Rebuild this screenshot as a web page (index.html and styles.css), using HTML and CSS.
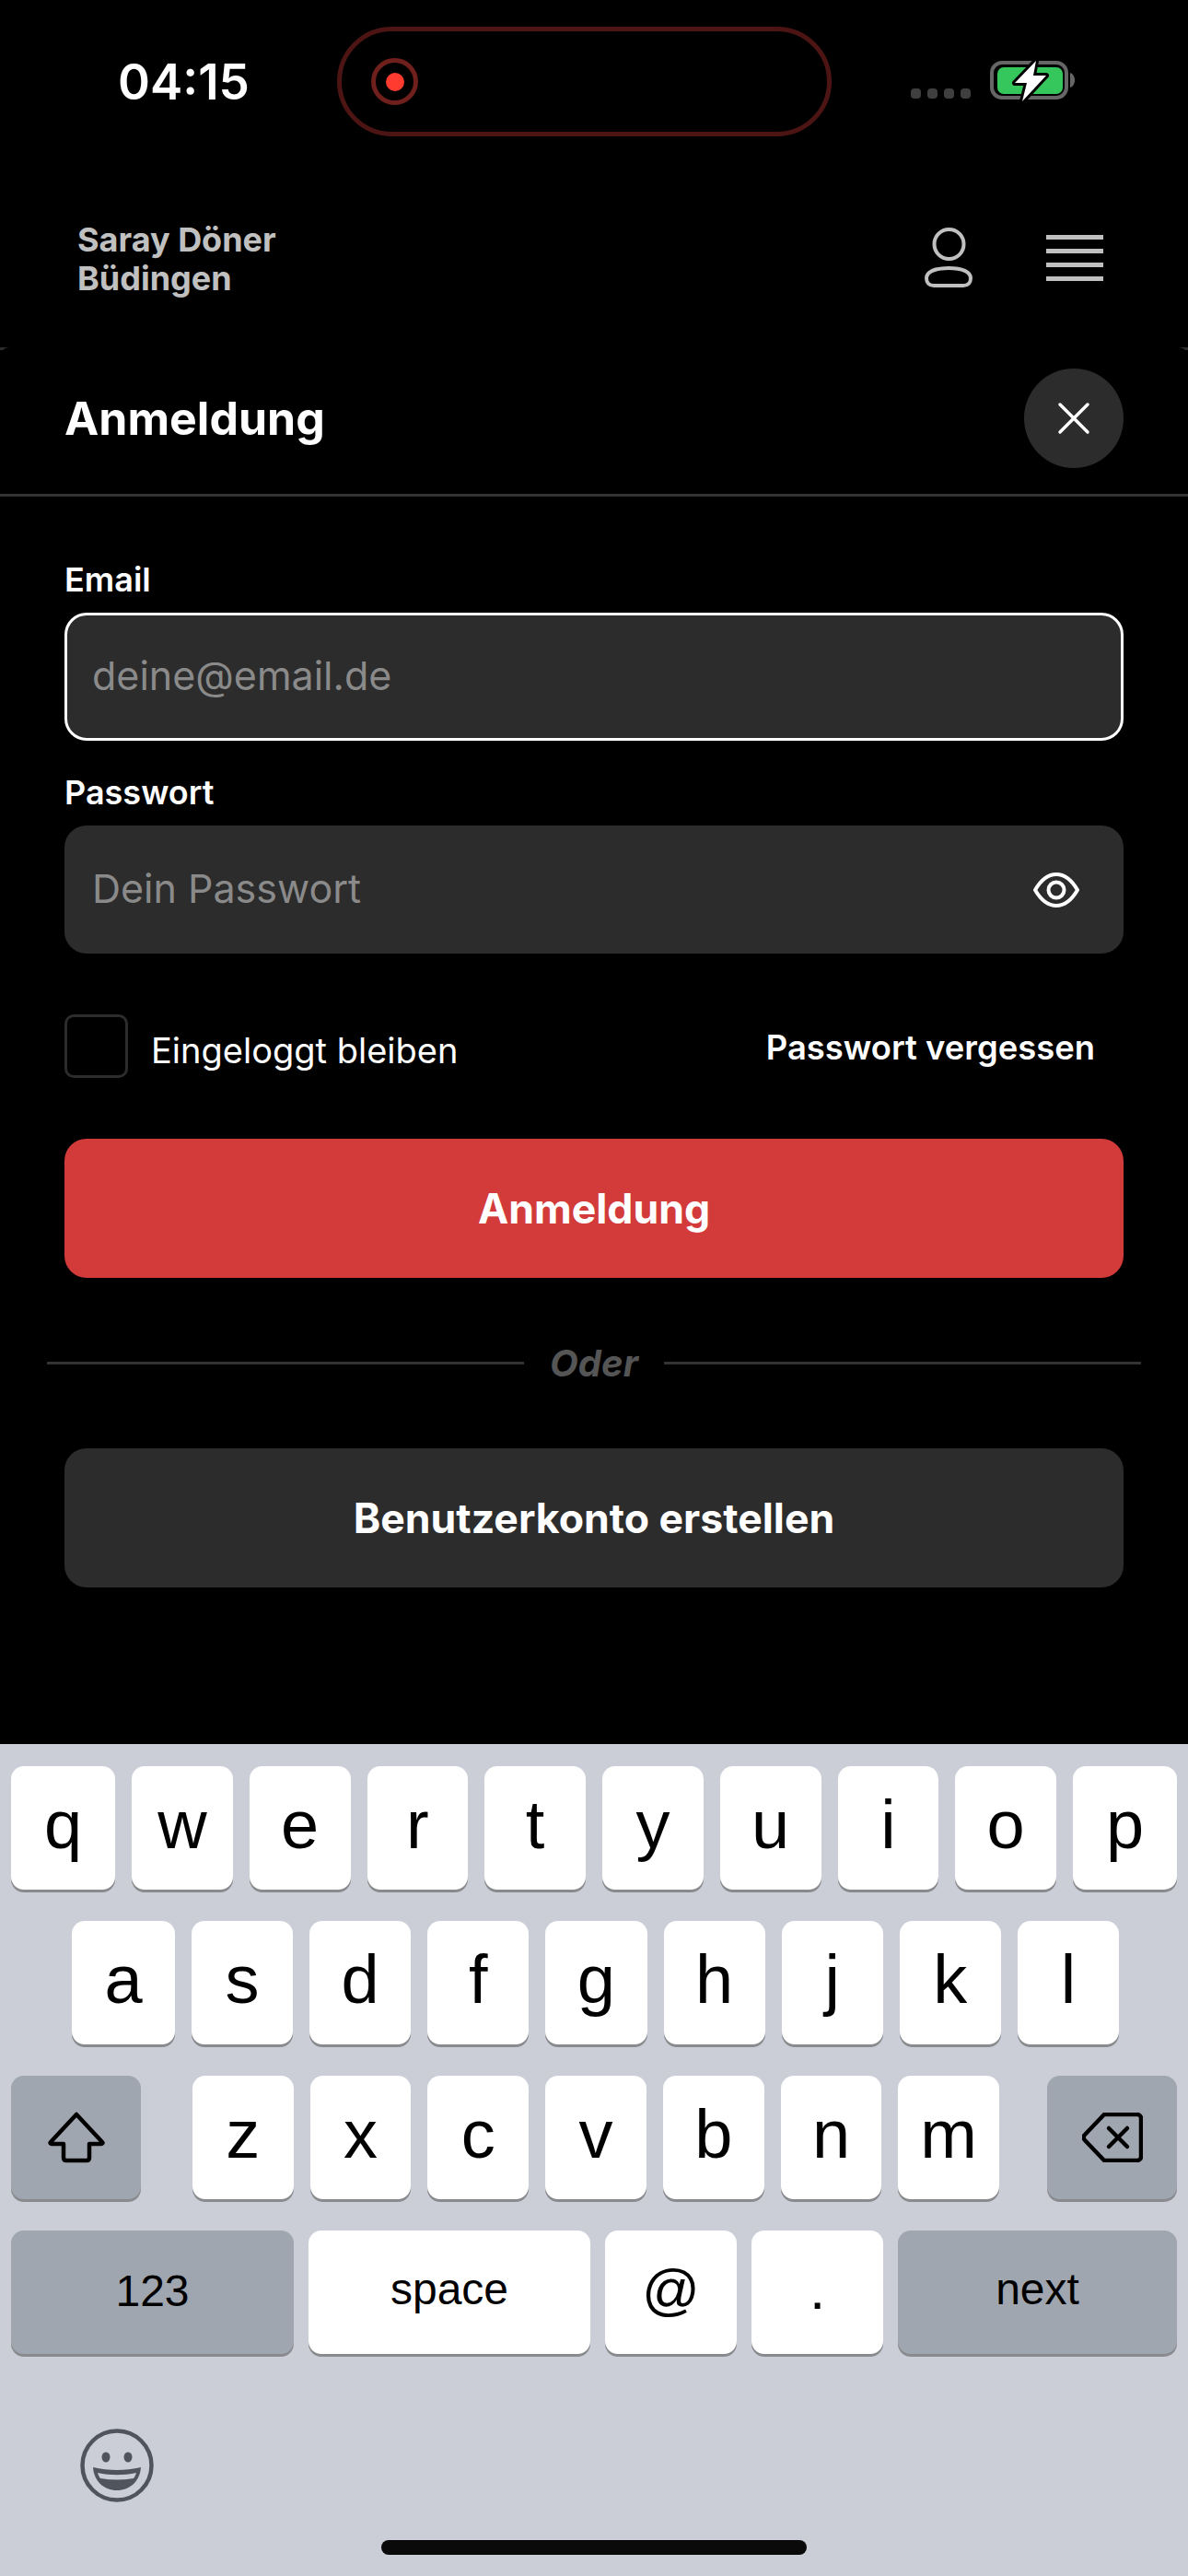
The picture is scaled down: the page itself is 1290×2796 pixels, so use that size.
FILE: index.html
```html
<!DOCTYPE html>
<html lang="de">
<head>
    <meta charset="UTF-8">
    <meta name="viewport" content="width=device-width, initial-scale=1.0">
    <title>Anmeldung</title>
    <link rel="stylesheet" href="styles.css">
</head>
<body>
    <div class="screen">
        <div class="status-bar">
            <span class="time">04:15</span>
            <div class="island">
                <span class="rec-ring"><span class="rec-dot"></span></span>
            </div>
            <div class="signal">
                <span></span><span></span><span></span><span></span>
            </div>
            <svg class="battery" width="94" height="46" viewBox="0 0 94 46">
                <rect x="2" y="4" width="81" height="38" rx="11" fill="none" stroke="#666" stroke-width="4"/>
                <rect x="8" y="9" width="71" height="29" rx="7" fill="#36c75c"/>
                <path d="M87 15c3 1 5 4 5 8s-2 7-5 8z" fill="#666"/>
                <path d="M50 2 27 26h13l-5 20 26-28H47z" fill="#fff" stroke="#000" stroke-width="6" stroke-linejoin="round" paint-order="stroke"/>
            </svg>
        </div>

        <div class="top-bar">
            <div class="shop-name">Saray Döner<br>Büdingen</div>
            <div class="top-icons">
                <svg width="54" height="68" viewBox="0 0 54 68" fill="none" stroke="#c0c0c0" stroke-width="4">
                    <circle cx="26.5" cy="19" r="16"/>
                    <path d="M2 56c0-7 9-11 24-11s24 4 24 11c0 5-3 8-8 8H10c-5 0-8-3-8-8z"/>
                </svg>
                <svg width="62" height="52" viewBox="0 0 62 52" fill="#c0c0c0">
                    <rect y="1" width="62" height="5"/>
                    <rect y="16" width="62" height="5"/>
                    <rect y="31" width="62" height="5"/>
                    <rect y="46" width="62" height="5"/>
                </svg>
            </div>
        </div>

        <div class="sheet">
            <div class="sheet-head">
                <h2>Anmeldung</h2>
                <button class="close-btn">
                    <svg width="36" height="36" viewBox="0 0 36 36" stroke="#fff" stroke-width="3.5" stroke-linecap="round">
                        <path d="M3 3l30 30M33 3 3 33"/>
                    </svg>
                </button>
            </div>

            <div class="form">
                <label class="field-label">Email</label>
                <div class="field field-active"><span class="placeholder">deine@email.de</span></div>

                <label class="field-label label-pass">Passwort</label>
                <div class="field">
                    <span class="placeholder">Dein Passwort</span>
                    <svg width="50" height="38" viewBox="0 0 50 38" fill="none" stroke="#fff" stroke-width="4">
                        <path d="M2 19C9 7 16 2 25 2s16 5 23 17c-7 12-14 17-23 17S9 31 2 19z" stroke-linejoin="round"/>
                        <circle cx="25" cy="19" r="8.5"/>
                    </svg>
                </div>

                <div class="options">
                    <label class="remember"><span class="checkbox"></span><span class="remember-text">Eingeloggt bleiben</span></label>
                    <a class="forgot">Passwort vergessen</a>
                </div>

                <button class="btn btn-red">Anmeldung</button>

                <div class="or-line"><span>Oder</span></div>

                <button class="btn btn-dark">Benutzerkonto erstellen</button>
            </div>
        </div>

        <div class="keyboard">
            <div class="kb-row kb-row-top">
                <div class="key">q</div><div class="key">w</div><div class="key">e</div><div class="key">r</div><div class="key">t</div><div class="key">y</div><div class="key">u</div><div class="key">i</div><div class="key">o</div><div class="key">p</div>
            </div>
            <div class="kb-row kb-row-mid">
                <div class="key">a</div><div class="key">s</div><div class="key">d</div><div class="key">f</div><div class="key">g</div><div class="key">h</div><div class="key">j</div><div class="key">k</div><div class="key">l</div>
            </div>
            <div class="kb-row">
                <div class="key key-grey key-shift">
                    <svg width="62" height="56" viewBox="0 0 62 56" fill="none" stroke="#000" stroke-width="4.5" stroke-linejoin="round">
                        <path d="M31 3 3 33c-1 1 0 2 1 2h13v15c0 2 1 3 3 3h22c2 0 3-1 3-3V35h13c1 0 2-1 1-2z"/>
                    </svg>
                </div>
                <div class="key-group">
                    <div class="key">z</div><div class="key">x</div><div class="key">c</div><div class="key">v</div><div class="key">b</div><div class="key">n</div><div class="key">m</div>
                </div>
                <div class="key key-grey key-shift">
                    <svg width="66" height="54" viewBox="0 0 66 54" fill="none" stroke="#000" stroke-width="4.5" stroke-linecap="round" stroke-linejoin="round">
                        <path d="M24 2h36c2 0 4 2 4 4v42c0 2-2 4-4 4H24L3 30c-2-2-2-4 0-6z"/>
                        <path d="M29 17l20 20M49 17 29 37"/>
                    </svg>
                </div>
            </div>
            <div class="kb-row kb-row-last">
                <div class="key key-grey key-small key-123">123</div>
                <div class="key key-small key-space">space</div>
                <div class="key key-at">@</div>
                <div class="key key-at">.</div>
                <div class="key key-grey key-small key-next">next</div>
            </div>
            <div class="kb-bottom">
                <svg width="80" height="80" viewBox="0 0 80 80">
                    <circle cx="40" cy="40" r="37.5" fill="none" stroke="#50545c" stroke-width="4.5"/>
                    <ellipse cx="28" cy="31" rx="4.5" ry="5.5" fill="#50545c"/>
                    <ellipse cx="52" cy="31" rx="4.5" ry="5.5" fill="#50545c"/>
                    <path d="M14 42c17 4 35 4 52 0-1 15-12 25-26 25S15 57 14 42z" fill="#50545c"/>
                    <path d="M19 48c14 3 28 3 42 0-1 3-2 5-3 6-12 2-24 2-36 0-1-1-2-3-3-6z" fill="#cbced7"/>
                </svg>
            </div>
            <div class="home-bar"></div>
        </div>
    </div>
</body>
</html>
```

FILE: styles.css
```css
* {
    box-sizing: border-box;
}
html, body {
    margin: 0;
    padding: 0;
    background: #000;
}
body {
    font-family: Inter, "Liberation Sans", sans-serif;
    color: #fff;
}
button {
    font-family: inherit;
    border: none;
    color: #fff;
}
.screen {
    width: 1290px;
    height: 2796px;
    display: flex;
    flex-direction: column;
    overflow: hidden;
}

/* status bar */
.status-bar {
    height: 119px;
    margin-top: 29px;
    padding-left: 128px;
    display: flex;
    align-items: center;
}
.time {
    width: 238px;
    font-size: 53px;
    font-weight: 600;
}
.island {
    width: 537px;
    height: 119px;
    border: 5px solid #4d1414;
    border-radius: 60px;
    padding-left: 32px;
    display: flex;
    align-items: center;
}
.rec-ring {
    width: 51px;
    height: 51px;
    border: 5px solid #6f1f1c;
    border-radius: 50%;
    display: flex;
    align-items: center;
    justify-content: center;
}
.rec-dot {
    width: 20px;
    height: 20px;
    background: #ff3b30;
    border-radius: 50%;
}
.signal {
    display: flex;
    gap: 7px;
    margin-left: 86px;
    margin-top: 26px;
}
.signal span {
    width: 11px;
    height: 11px;
    background: #3f3f3f;
    border-radius: 4px;
}
.battery {
    margin-left: 21px;
    margin-top: -4px;
}

/* top bar */
.top-bar {
    height: 232px;
    padding: 91px 92px 0 84px;
    border-bottom: 3px solid #2e2e2e;
    display: flex;
    justify-content: space-between;
    align-items: flex-start;
}
.shop-name {
    font-size: 36px;
    font-weight: 700;
    line-height: 42px;
    color: #c0c0c0;
}
.top-icons {
    margin-top: 7px;
    display: flex;
    align-items: center;
    gap: 78px;
}

/* sheet */
.sheet {
    flex: 1;
    margin-top: -3px;
    background: #000;
    border-top-left-radius: 10px;
    border-top-right-radius: 10px;
}
.sheet-head {
    height: 162px;
    padding: 0 70px 6px;
    border-bottom: 3px solid #333;
    display: flex;
    justify-content: space-between;
    align-items: center;
}
.sheet-head h2 {
    margin: 0;
    font-size: 50px;
    font-weight: 700;
}
.close-btn {
    width: 108px;
    height: 108px;
    padding: 0;
    border-radius: 50%;
    background: #2c2c2c;
    display: flex;
    align-items: center;
    justify-content: center;
}
.form {
    padding: 0 70px;
}
.field-label {
    display: block;
    margin-top: 68px;
    font-size: 36px;
    line-height: 44px;
    font-weight: 600;
}
.label-pass {
    margin-top: 34px;
}
.field {
    height: 139px;
    margin-top: 14px;
    padding: 0 48px 0 30px;
    background: #2c2c2c;
    border-radius: 24px;
    display: flex;
    align-items: center;
    justify-content: space-between;
}
.field-active {
    border: 3px solid #fff;
    padding-left: 27px;
}
.placeholder {
    padding-bottom: 4px;
    font-size: 43px;
    color: #8a8a8a;
}
.options {
    margin-top: 66px;
    display: flex;
    justify-content: space-between;
    align-items: center;
    padding-right: 31px;
}
.remember {
    display: flex;
    align-items: center;
    gap: 25px;
    font-size: 38px;
}
.remember-text {
    padding-top: 8px;
}
.checkbox {
    width: 69px;
    height: 69px;
    border: 3px solid #2c2c2c;
    border-radius: 10px;
}
.forgot {
    padding-top: 2px;
    font-size: 36.4px;
    font-weight: 600;
}
.btn {
    display: block;
    width: 100%;
    height: 151px;
    border-radius: 24px;
    font-size: 44.6px;
    font-weight: 700;
}
.btn-red {
    margin-top: 66px;
    background: #d23b3a;
}
.btn-dark {
    background: #2c2c2c;
}
.or-line {
    height: 185px;
    margin: 0 -19px;
    display: flex;
    align-items: center;
    gap: 28px;
    color: #555;
    font-size: 40px;
    font-style: italic;
    font-weight: 700;
}
.or-line::before, .or-line::after {
    content: "";
    flex: 1;
    height: 3px;
    background: #333;
}

/* keyboard */
.keyboard {
    height: 903px;
    padding: 24px 12px 0;
    background: #cbced7;
    color: #000;
    position: relative;
}
.kb-row {
    display: flex;
    gap: 18px;
    margin-bottom: 34px;
}
.kb-row-top .key:first-child, .kb-row-top .key:last-child {
    flex: 0 0 113px;
}
.kb-row-mid {
    padding: 0 63px 0 66px;
}
.kb-row-mid .key:first-child {
    flex: 0 0 112px;
}
.kb-row-last {
    gap: 16px;
}
.key-group {
    flex: 1;
    display: flex;
    gap: 18px;
    margin: 0 34px 0 38px;
}
.key {
    flex: 1;
    height: 134px;
    background: #fff;
    border-radius: 14px;
    box-shadow: 0 3px 0 #898a8e;
    display: flex;
    align-items: center;
    justify-content: center;
    font-family: "Liberation Sans", sans-serif;
    font-size: 74px;
    padding-bottom: 8px;
}
.key-grey {
    background: #a0a6af;
}
.key-shift {
    flex: 0 0 141px;
    padding-bottom: 0;
}
.key-small {
    font-size: 48px;
}
.key-123 {
    flex: 0 0 307px;
    padding-bottom: 4px;
}
.key-space {
    flex: 0 0 306px;
}
.key-at {
    flex: 0 0 143px;
    font-size: 62px;
}
.key-next {
    flex: 1;
}
.kb-bottom {
    margin-top: 81px;
    padding-left: 75px;
    display: flex;
}
.home-bar {
    position: absolute;
    left: 414px;
    bottom: 23px;
    width: 462px;
    height: 16px;
    background: #0a0a0a;
    border-radius: 8px;
}
```
